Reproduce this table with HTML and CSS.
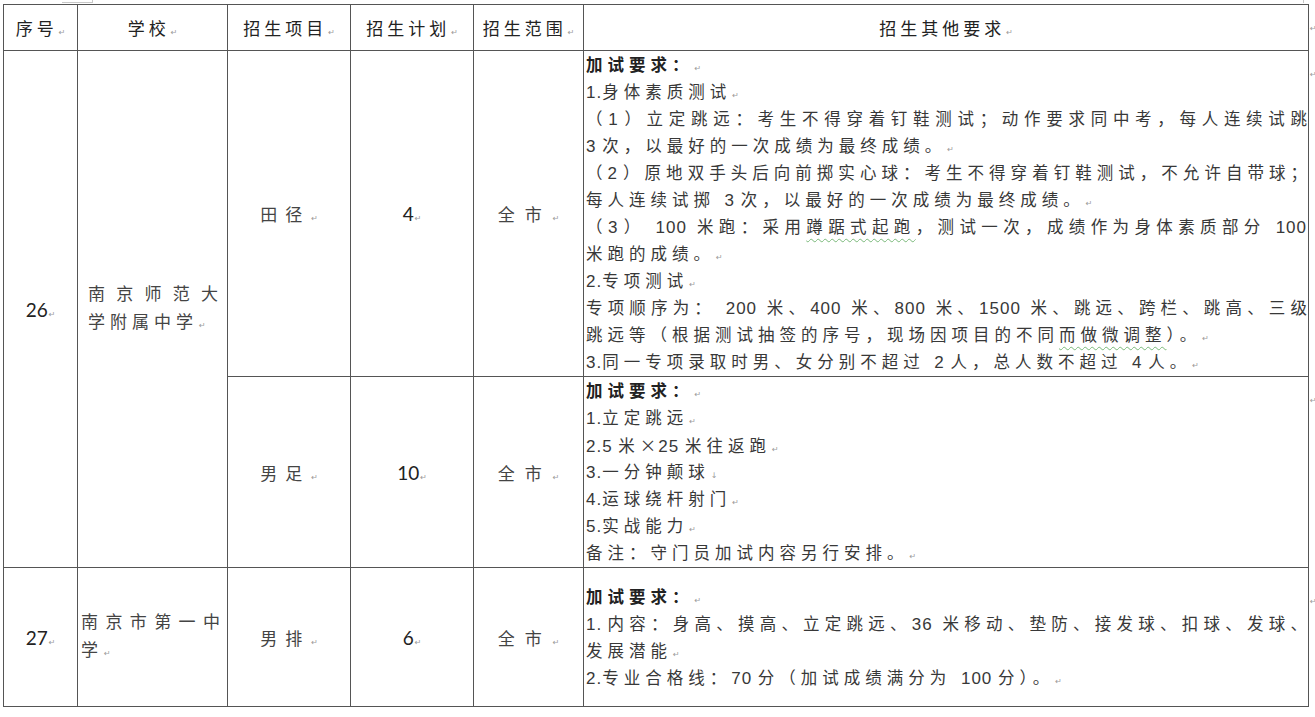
FILE: index.html
```html
<!DOCTYPE html>
<html lang="zh-CN">
<head>
<meta charset="utf-8">
<title>招生要求</title>
<link rel="stylesheet" href="styles.css">
</head>
<body>
<div class="page">
  <span class="corner corner-l"></span>
  <span class="corner corner-r"></span>
  <table class="grid">
    <colgroup>
      <col class="w-no"><col class="w-sch"><col class="w-item"><col class="w-plan"><col class="w-area"><col class="w-req"><col class="w-eor">
    </colgroup>
    <thead>
      <tr class="hd">
        <th>序号<i class="pm">↵</i></th>
        <th>学校<i class="pm">↵</i></th>
        <th>招生项目<i class="pm">↵</i></th>
        <th>招生计划<i class="pm">↵</i></th>
        <th>招生范围<i class="pm">↵</i></th>
        <th>招生其他要求<i class="pm">↵</i></th>
        <td class="eor"><i class="pm">↵</i></td>
      </tr>
    </thead>
    <tbody>
      <tr class="r1">
        <td class="c-no" rowspan="2">26<i class="pm">↵</i></td>
        <td class="c-sch" rowspan="2">
          <div class="full">南京师范大</div>
          <div>学附属中学<i class="pm">↵</i></div>
        </td>
        <td class="c-item">田径<i class="pm">↵</i></td>
        <td class="c-no">4<i class="pm">↵</i></td>
        <td class="c-area">全市<i class="pm">↵</i></td>
        <td class="req">
          <div class="ln b">加试要求：<i class="pm">↵</i></div>
          <div class="ln"><span class="n">1.</span>身体素质测试<i class="pm">↵</i></div>
          <div class="ln full">（<span class="n">1</span>）立定跳远：考生不得穿着钉鞋测试；动作要求同中考，每人连续试跳</div>
          <div class="ln"><span class="n">3 </span>次，以最好的一次成绩为最终成绩。<i class="pm">↵</i></div>
          <div class="ln full">（<span class="n">2</span>）原地双手头后向前掷实心球：考生不得穿着钉鞋测试，不允许自带球；</div>
          <div class="ln">每人连续试掷 <span class="n">3 </span>次，以最好的一次成绩为最终成绩。<i class="pm">↵</i></div>
          <div class="ln full">（<span class="n">3</span>） <span class="n">100</span> 米跑：采用<span class="wavy">蹲踞式起跑</span>，测试一次，成绩作为身体素质部分 <span class="n">100</span></div>
          <div class="ln">米跑的成绩。<i class="pm">↵</i></div>
          <div class="ln"><span class="n">2.</span>专项测试<i class="pm">↵</i></div>
          <div class="ln full">专项顺序为： <span class="n">200</span> 米、<span class="n">400</span> 米、<span class="n">800</span> 米、<span class="n">1500</span> 米、跳远、跨栏、跳高、三级</div>
          <div class="ln">跳远等（根据测试抽签的序号，现场因项目的不同<span class="wavy">而做微调整</span>）。<i class="pm">↵</i></div>
          <div class="ln"><span class="n">3.</span>同一专项录取时男、女分别不超过 <span class="n">2 </span>人，总人数不超过 <span class="n">4 </span>人。<i class="pm">↵</i></div>
        </td>
        <td class="eor"><i class="pm">↵</i></td>
      </tr>
      <tr class="r2">
        <td class="c-item">男足<i class="pm">↵</i></td>
        <td class="c-no">10<i class="pm">↵</i></td>
        <td class="c-area">全市<i class="pm">↵</i></td>
        <td class="req">
          <div class="ln b">加试要求：<i class="pm">↵</i></div>
          <div class="ln"><span class="n">1.</span>立定跳远<i class="pm">↵</i></div>
          <div class="ln"><span class="n">2.5 </span>米<span class="x">×</span><span class="n">25 </span>米往返跑<i class="pm">↵</i></div>
          <div class="ln"><span class="n">3.</span>一分钟颠球<i class="pm">↓</i></div>
          <div class="ln"><span class="n">4.</span>运球绕杆射门<i class="pm">↵</i></div>
          <div class="ln"><span class="n">5.</span>实战能力<i class="pm">↵</i></div>
          <div class="ln">备注：守门员加试内容另行安排。<i class="pm">↵</i></div>
        </td>
        <td class="eor"><i class="pm">↵</i></td>
      </tr>
      <tr class="r3">
        <td class="c-no">27<i class="pm">↵</i></td>
        <td class="c-sch c-sch-2">
          <div class="full">南京市第一中</div>
          <div>学<i class="pm">↵</i></div>
        </td>
        <td class="c-item">男排<i class="pm">↵</i></td>
        <td class="c-no">6<i class="pm">↵</i></td>
        <td class="c-area">全市<i class="pm">↵</i></td>
        <td class="req mid">
          <div class="ln b">加试要求：<i class="pm">↵</i></div>
          <div class="ln full"><span class="n">1.</span>内容：身高、摸高、立定跳远、<span class="n">36</span> 米移动、垫防、接发球、扣球、发球、</div>
          <div class="ln">发展潜能<i class="pm">↵</i></div>
          <div class="ln"><span class="n">2.</span>专业合格线：<span class="n">70 </span>分（加试成绩满分为 <span class="n">100 </span>分）。<i class="pm">↵</i></div>
        </td>
        <td class="eor eor-low"><i class="pm">↵</i></td>
      </tr>
    </tbody>
  </table>
</div>
</body>
</html>
```
FILE: styles.css
```css
html {
  overflow: hidden;
}

body {
  margin: 0;
  background: #ffffff;
  font-family: "Liberation Sans", "Noto Sans CJK SC", sans-serif;
  color: #333333;
}

.page {
  position: relative;
  padding: 4px 0 0 3px;
}

.corner {
  position: absolute;
  top: 0;
  border-color: #c8c8c8;
  border-style: solid;
  border-width: 0;
}

.corner-l {
  left: 62px;
  width: 30px;
  height: 2px;
  border-right-width: 1px;
  border-bottom-width: 1px;
}

.corner-r {
  left: 1303px;
  width: 0;
  height: 3px;
  border-left-width: 1px;
}

.grid {
  border-collapse: collapse;
  table-layout: fixed;
  width: 1311px;
}

.w-no { width: 74px; }
.w-sch { width: 150px; }
.w-item { width: 123px; }
.w-plan { width: 123px; }
.w-area { width: 110px; }
.w-req { width: 725px; }
.w-eor { width: 6px; }

.grid th,
.grid td {
  border: 1px solid #555555;
  padding: 0;
}

.grid td.eor {
  border: none;
  vertical-align: top;
  padding-top: 12px;
  text-align: left;
}

.grid td.eor-low {
  padding-top: 22px;
}

.hd { height: 46px; }
.r1 { height: 326px; }
.r2 { height: 190px; }
.r3 { height: 139px; }

.grid th {
  font-family: "Noto Sans CJK SC", sans-serif;
  font-weight: 400;
  font-size: 17px;
  letter-spacing: 4px;
  color: #222222;
  text-align: center;
  vertical-align: middle;
}

.pm {
  font-family: "DejaVu Sans", sans-serif;
  font-style: normal;
  font-size: 8px;
  letter-spacing: 0;
  color: #9a9a9a;
  margin-left: 1px;
  font-weight: 400;
}

.c-no {
  font-family: "Lato", "Liberation Sans", sans-serif;
  font-size: 19px;
  color: #222222;
  text-align: center;
  vertical-align: middle;
}

.c-sch {
  font-family: "Noto Sans CJK SC", sans-serif;
  font-size: 17px;
  line-height: 28px;
  letter-spacing: 5px;
  color: #444444;
  padding: 0 9px 0 10px !important;
  vertical-align: middle;
  text-align: left;
}

.c-sch-2 {
  padding: 0 7px 0 3px !important;
}

.c-sch .full {
  letter-spacing: 0;
  text-align-last: justify;
}

.c-item,
.c-area {
  font-family: "Noto Sans CJK SC", sans-serif;
  font-size: 17px;
  color: #444444;
  text-align: center;
  vertical-align: middle;
}

.c-item { letter-spacing: 8px; }
.c-area { letter-spacing: 10px; }

.req {
  padding: 1px 1px 0 2px !important;
  vertical-align: top;
  text-align: left;
}

.req.mid {
  vertical-align: middle;
}

.ln {
  font-size: 16.5px;
  line-height: 27px;
  height: 27px;
  letter-spacing: 5px;
  color: #383838;
  white-space: nowrap;
}

.ln.full {
  letter-spacing: 0;
  white-space: normal;
  text-align-last: justify;
  text-align: justify;
}

.ln.b {
  font-weight: 700;
  color: #222222;
}

.n {
  font-size: 17px;
  letter-spacing: 1px;
}

.x {
  font-family: "Noto Sans CJK SC", sans-serif;
  letter-spacing: 2px;
}

.wavy {
  text-decoration-line: underline;
  text-decoration-style: wavy;
  text-decoration-color: #79b879;
  text-decoration-thickness: 1px;
  text-underline-offset: 5px;
}
```
